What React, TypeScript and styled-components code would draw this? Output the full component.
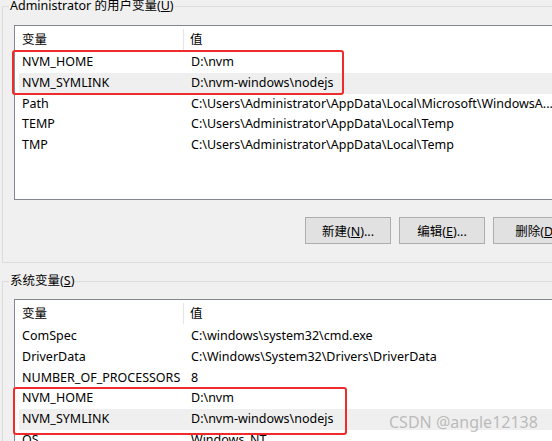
import React from 'react';
import styled, { createGlobalStyle } from 'styled-components';

const Global = createGlobalStyle`
  html, body { margin: 0; padding: 0; background: #f0f0f0; overflow: hidden; }
  body {
    font-family: "Noto Sans", "Noto Sans CJK SC", sans-serif;
    font-size: 12.5px;
    color: #000;
  }
`;

const Page = styled.div`
  position: relative;
  width: 620px;
  height: 441px;
  padding-left: 2px;
  box-sizing: border-box;
  overflow: hidden;
`;

const Group = styled.fieldset<{ $first?: boolean }>`
  margin: ${p => (p.$first ? '0' : '12px 0 0 0')};
  padding: 0 0 ${p => (p.$first ? 18 : 0)}px 0;
  border: 1px solid #dcdcdc;
  min-width: 0;
  ${p => (p.$first ? '' : 'height: 200px;')}
`;

const Legend = styled.legend`
  margin-left: 6px;
  padding: 0 1px;
  line-height: 12px;
  font-size: 12.5px;
  color: #000;
`;

const ListView = styled.div<{ $h: number; $mt: number }>`
  position: relative;
  margin: ${p => p.$mt}px 0 0 11px;
  width: 580px;
  height: ${p => p.$h}px;
  box-sizing: border-box;
  border: 1px solid #828790;
  background: #fff;
  padding-left: 4px;
`;

const Header = styled.div`
  display: grid;
  grid-template-columns: 165px 1fr;
  height: 26px;
  align-items: center;
`;

const HeaderCell = styled.div<{ $first?: boolean }>`
  height: 21px;
  line-height: 21px;
  padding-left: ${p => (p.$first ? 3 : 6)}px;
  border-right: ${p => (p.$first ? '1px solid #e5e5e5' : 'none')};
  white-space: nowrap;
`;

const Row = styled.div<{ $hl?: boolean }>`
  display: grid;
  grid-template-columns: 165px 1fr;
  height: 20.75px;
  line-height: 20.75px;
  background: ${p => (p.$hl ? '#efefef' : 'transparent')};
`;

const Cell = styled.div<{ $first?: boolean }>`
  padding-left: ${p => (p.$first ? 3 : 7)}px;
  white-space: nowrap;
  overflow: hidden;
`;

const Mark = styled.div<{ $left: number; $top: number; $w: number; $h: number }>`
  position: absolute;
  left: ${p => p.$left}px;
  top: ${p => p.$top}px;
  width: ${p => p.$w}px;
  height: ${p => p.$h}px;
  box-sizing: border-box;
  border: 2.5px solid #ef2b2b;
  border-radius: 3px;
  pointer-events: none;
`;

const Buttons = styled.div`
  display: flex;
  gap: 8px;
  margin-top: 17px;
  padding-left: 302px;
`;

const Button = styled.button`
  width: 86px;
  height: 27px;
  box-sizing: border-box;
  border: 1px solid #adadad;
  background: #e1e1e1;
  font-family: inherit;
  font-size: 12.5px;
  color: #000;
  padding: 0;
  flex: none;
`;

const Watermark = styled.div`
  position: absolute;
  left: 389px;
  top: 411px;
  font-family: "Noto Sans", sans-serif;
  font-size: 16px;
  color: rgba(150, 150, 150, 0.6);
  white-space: nowrap;
  pointer-events: none;
`;

type Item = [string, string, boolean?];

const userVars: Item[] = [
  ['NVM_HOME', 'D:\\nvm'],
  ['NVM_SYMLINK', 'D:\\nvm-windows\\nodejs', true],
  ['Path', 'C:\\Users\\Administrator\\AppData\\Local\\Microsoft\\WindowsA...'],
  ['TEMP', 'C:\\Users\\Administrator\\AppData\\Local\\Temp'],
  ['TMP', 'C:\\Users\\Administrator\\AppData\\Local\\Temp'],
];

const sysVars: Item[] = [
  ['ComSpec', 'C:\\windows\\system32\\cmd.exe'],
  ['DriverData', 'C:\\Windows\\System32\\Drivers\\DriverData'],
  ['NUMBER_OF_PROCESSORS', '8'],
  ['NVM_HOME', 'D:\\nvm'],
  ['NVM_SYMLINK', 'D:\\nvm-windows\\nodejs', true],
  ['OS', 'Windows_NT'],
];

const Rows = ({ items }: { items: Item[] }) => (
  <>
    <Header>
      <HeaderCell $first>变量</HeaderCell>
      <HeaderCell>值</HeaderCell>
    </Header>
    {items.map(([k, v, hl]) => (
      <Row key={k} $hl={hl}>
        <Cell $first>{k}</Cell>
        <Cell>{v}</Cell>
      </Row>
    ))}
  </>
);

export default function App() {
  return (
    <Page>
      <Global />
      <Group $first>
        <Legend>
          Administrator 的用户变量(<u>U</u>)
        </Legend>
        <ListView $h={175} $mt={13}>
          <Rows items={userVars} />
          <Mark $left={-3} $top={24} $w={332} $h={45} />
        </ListView>
        <Buttons>
          <Button>
            新建(<u>N</u>)...
          </Button>
          <Button>
            编辑(<u>E</u>)...
          </Button>
          <Button>
            删除(<u>D</u>)
          </Button>
        </Buttons>
      </Group>
      <Group>
        <Legend>
          系统变量(<u>S</u>)
        </Legend>
        <ListView $h={200} $mt={12}>
          <Rows items={sysVars} />
          <Mark $left={-2} $top={87} $w={334} $h={48} />
        </ListView>
      </Group>
      <Watermark>CSDN @angle12138</Watermark>
    </Page>
  );
}
